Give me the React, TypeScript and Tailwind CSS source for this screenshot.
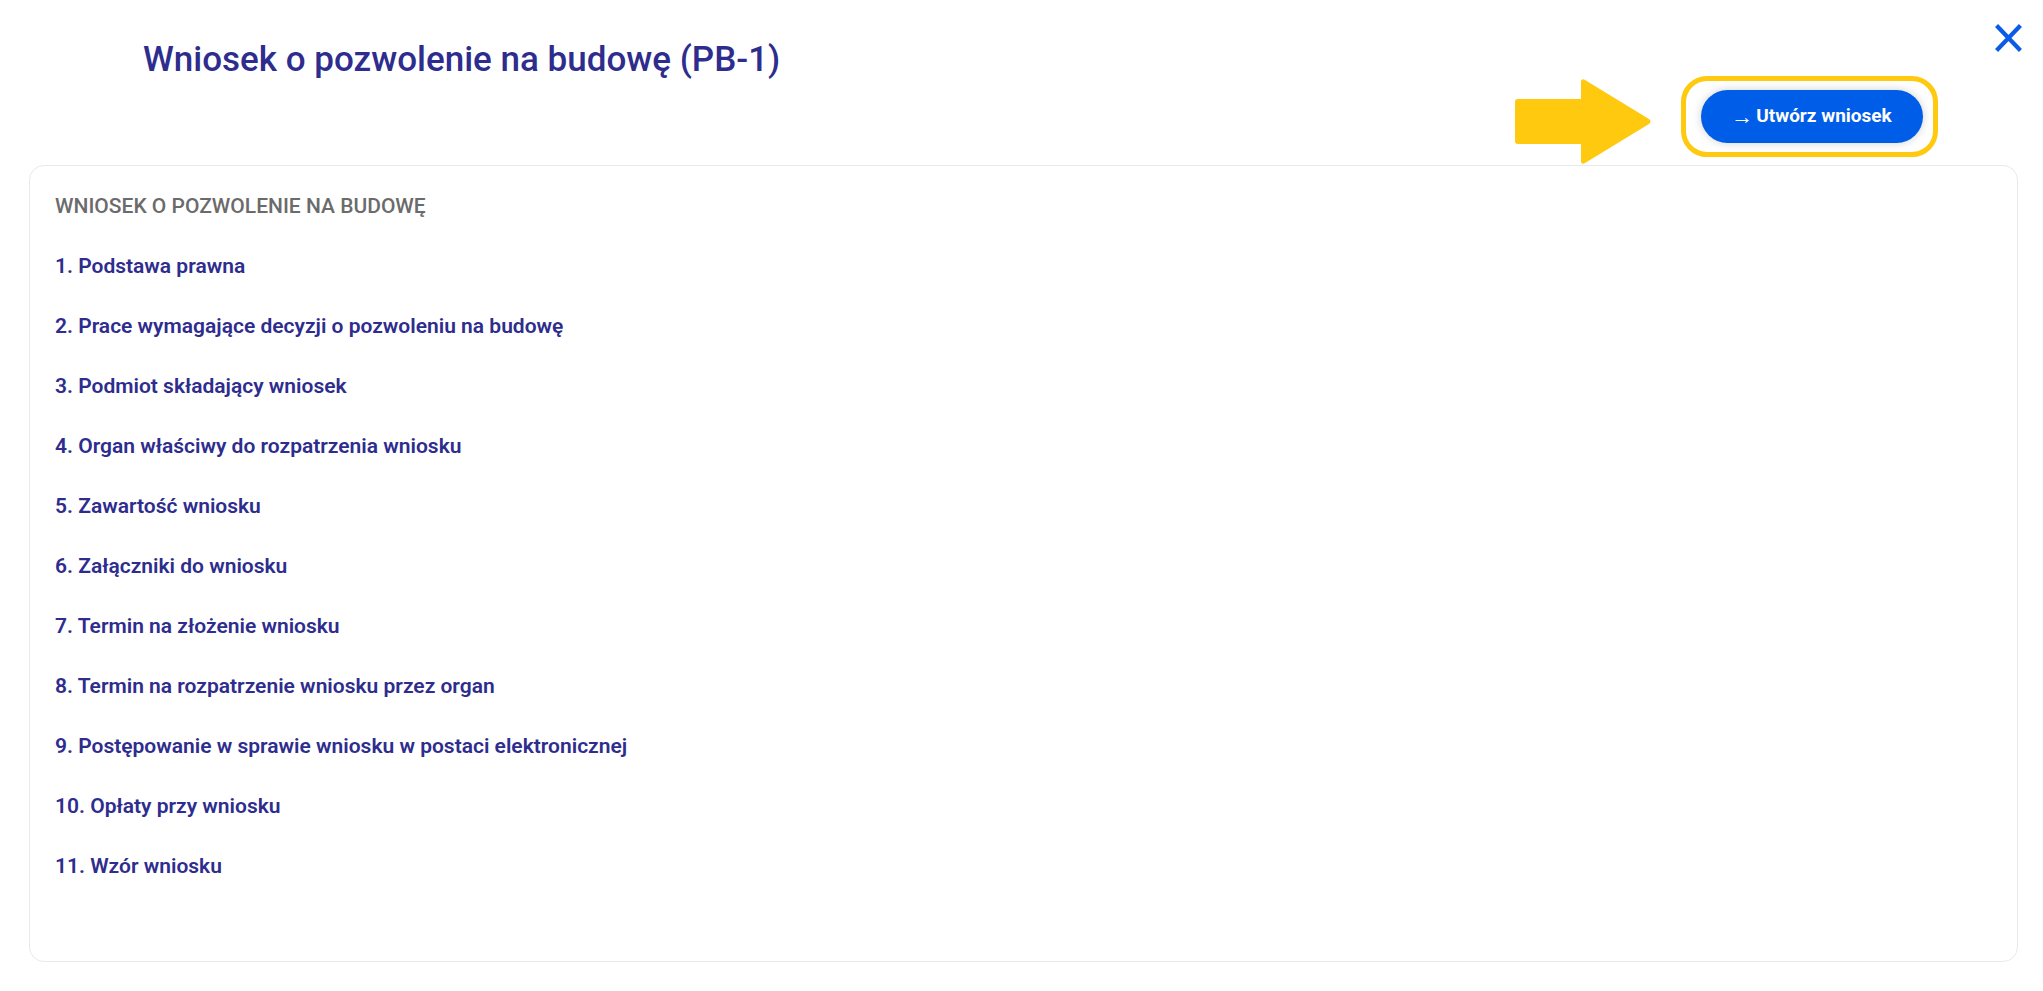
import React from "react";

const sections = [
  "1. Podstawa prawna",
  "2. Prace wymagające decyzji o pozwoleniu na budowę",
  "3. Podmiot składający wniosek",
  "4. Organ właściwy do rozpatrzenia wniosku",
  "5. Zawartość wniosku",
  "6. Załączniki do wniosku",
  "7. Termin na złożenie wniosku",
  "8. Termin na rozpatrzenie wniosku przez organ",
  "9. Postępowanie w sprawie wniosku w postaci elektronicznej",
  "10. Opłaty przy wniosku",
  "11. Wzór wniosku",
];

function YellowArrow() {
  return (
    <svg width="138" height="87" viewBox="0 0 138 87" className="mt-[2px] shrink-0">
      <path
        d="M4 21 H67 V3 Q68 0 71 2 L135 41 Q138 43.5 135 46 L71 85 Q68 87 67 84 V66 H4 Q1 66 1 63 V24 Q1 21 4 21 Z"
        fill="#fec90e"
      />
    </svg>
  );
}

function CloseIcon() {
  return (
    <svg width="27" height="28" viewBox="0 0 27 28">
      <path d="M3 3 L24 25 M24 3 L3 25" stroke="#0a5ce6" strokeWidth="4.2" strokeLinecap="square" />
    </svg>
  );
}

export default function App() {
  return (
    <div className="relative min-h-[991px] w-full bg-white font-['Roboto','Liberation_Sans',sans-serif]">
      <button className="absolute right-[21px] top-[24px]" aria-label="Zamknij">
        <CloseIcon />
      </button>

      <div className="flex items-start justify-between">
        <h1 className="pl-[143px] pt-[40px] text-[35px] leading-[40px] font-medium text-[#2e2d8e]">
          Wniosek o pozwolenie na budowę (PB-1)
        </h1>
        <div className="flex items-start gap-[29px] pr-[105px] pt-[76px]">
          <YellowArrow />
          <div className="flex h-[81px] w-[257px] items-center justify-center rounded-[26px] border-[5px] border-[#fec90e]">
            <button className="ml-[4px] flex h-[53px] w-[222px] items-center justify-center gap-[3px] rounded-full bg-[#005de8] text-[19px] font-bold text-white shadow-[0_0_10px_rgba(0,0,0,0.18)]">
              <span className="text-[22px] font-normal leading-none">→</span>
              <span>Utwórz wniosek</span>
            </button>
          </div>
        </div>
      </div>

      <div className="ml-[29px] mr-[25px] rounded-[15px] border border-[#e9e9e9] pl-[25px] pt-[28px] pb-[81px]">
        <div className="text-[21px] leading-6 font-medium uppercase text-[#6b6b6b]">
          Wniosek o pozwolenie na budowę
        </div>
        <ul className="mt-[34px] flex flex-col gap-8">
          {sections.map((s) => (
            <li key={s} className="text-[21px] leading-7 font-semibold text-[#2e2d8e]">
              {s}
            </li>
          ))}
        </ul>
      </div>
    </div>
  );
}
